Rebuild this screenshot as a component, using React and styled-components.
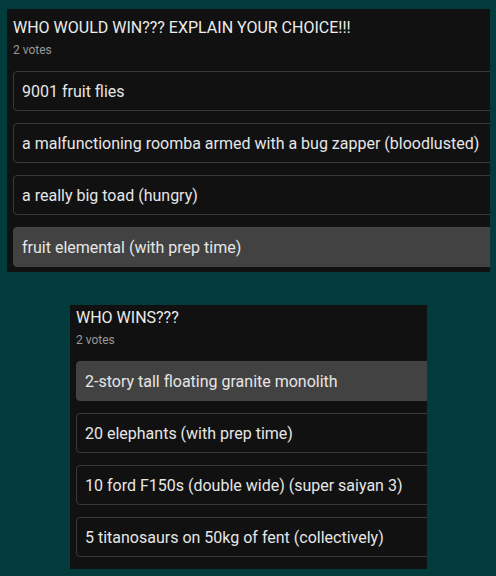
import React from "react";
import styled, { createGlobalStyle } from "styled-components";

const Global = createGlobalStyle`
  body {
    margin: 0;
    background: #023b3b;
    font-family: Roboto, "Liberation Sans", sans-serif;
  }
`;

const Page = styled.div`
  width: 496px;
  height: 576px;
  padding-top: 9px;
  box-sizing: border-box;
  display: flex;
  flex-direction: column;
  gap: 33px;
`;

const Card = styled.div`
  margin-left: ${(p) => p.left}px;
  width: ${(p) => p.width}px;
  padding: ${(p) => p.padTop}px 0 ${(p) => p.padBottom}px 6px;
  box-sizing: border-box;
  background: #111111;
  overflow: hidden;
`;

const Title = styled.div`
  color: #ececec;
  font-size: 16px;
  line-height: 19px;
  white-space: nowrap;
`;

const Votes = styled.div`
  margin-top: 6px;
  color: #9a9a9a;
  font-size: 12px;
  line-height: 14px;
`;

const Options = styled.div`
  margin-top: 14px;
  display: flex;
  flex-direction: column;
  gap: 12px;
`;

const Option = styled.div`
  width: 600px;
  padding: 10px 8px 9px;
  box-sizing: border-box;
  height: 40px;
  border: 1px solid ${(p) => (p.selected ? "#444444" : "#3a3a3a")};
  border-radius: 4px;
  background: ${(p) => (p.selected ? "#424242" : "#111111")};
  color: #e6e6e6;
  font-size: 16px;
  line-height: 19px;
  white-space: nowrap;
`;

const polls = [
  {
    title: "WHO WOULD WIN??? EXPLAIN YOUR CHOICE!!!",
    left: 7,
    width: 483,
    padTop: 9,
    padBottom: 5,
    selected: 3,
    options: [
      "9001 fruit flies",
      "a malfunctioning roomba armed with a bug zapper (bloodlusted)",
      "a really big toad (hungry)",
      "fruit elemental (with prep time)",
    ],
  },
  {
    title: "WHO WINS???",
    left: 70,
    width: 357,
    padTop: 3,
    padBottom: 12,
    selected: 0,
    options: [
      "2-story tall floating granite monolith",
      "20 elephants (with prep time)",
      "10 ford F150s (double wide) (super saiyan 3)",
      "5 titanosaurs on 50kg of fent (collectively)",
    ],
  },
];

export default function App() {
  return (
    <>
      <Global />
      <Page>
        {polls.map((poll) => (
          <Card
            key={poll.title}
            left={poll.left}
            width={poll.width}
            padTop={poll.padTop}
            padBottom={poll.padBottom}
          >
            <Title>{poll.title}</Title>
            <Votes>2 votes</Votes>
            <Options>
              {poll.options.map((opt, i) => (
                <Option key={opt} selected={i === poll.selected}>
                  {opt}
                </Option>
              ))}
            </Options>
          </Card>
        ))}
      </Page>
    </>
  );
}
